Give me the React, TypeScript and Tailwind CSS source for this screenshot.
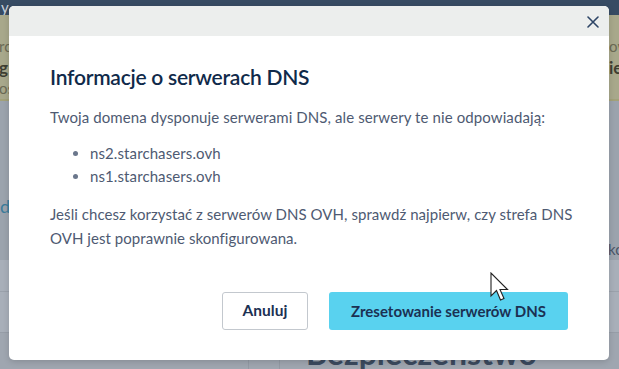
import React from "react";

const font = { fontFamily: "Lato, 'Noto Sans', sans-serif" };

export default function App() {
  return (
    <div className="relative w-[619px] h-[369px] overflow-hidden bg-[#9ba3ad]" style={font}>
      {/* background page (under overlay) */}
      <div className="flex flex-col h-full">
        <div className="h-[19px] bg-[#374b63] text-[#c9d0da] text-[15px] leading-[14px] pl-[1px]">y</div>
        <div className="h-[101px] bg-[#a8a88b] border-b-2 border-[#a2a17a] flex justify-between text-[#6b6a55]">
          <div className="w-[9px] overflow-hidden pt-[21px] text-[15px] leading-[21px] whitespace-nowrap">
            <div className="-ml-[1px]">rc</div>
            <div className="-ml-[1px] font-bold text-[#3e3e32] text-[17px]">g</div>
            <div className="-ml-[1px]">os</div>
          </div>
          <div className="w-[10px] overflow-hidden pt-[21px] text-[15px] leading-[21px] whitespace-nowrap">
            <div>ow</div>
            <div className="font-bold text-[#3e3e32] text-[17px]">ie</div>
          </div>
        </div>
        <div className="h-[168px] flex justify-between">
          <div className="w-[9px] overflow-hidden pt-[92px] text-[18px] text-[#3b7c9b] whitespace-nowrap">d</div>
          <div className="w-[11px] overflow-hidden pt-[137px] text-[15px] text-[#4a5568] whitespace-nowrap">ko</div>
        </div>
        <div className="flex-1 bg-[#a8afb9] flex flex-col">
          <div className="h-[32px] border-b border-[#9aa1ab]"></div>
          <div className="h-[40px]"></div>
          <div className="flex-1 flex bg-[#9fa6b0] border-t border-[#969da7]">
            <div className="w-[249px] border-r border-[#939aa4]"></div>
            <div className="w-[31px] border-r border-[#939aa4]"></div>
            <div className="pl-[26px] pt-[4px] text-[32px] leading-[32px] font-bold text-[#3b4a5e] whitespace-nowrap">Bezpieczeństwo</div>
          </div>
        </div>
      </div>

      {/* modal */}
      <div className="absolute left-[9px] top-[6px] w-[600px] h-[354px] bg-white rounded-[5px] overflow-hidden shadow-[0_2px_6px_rgba(0,0,0,0.15)] flex flex-col">
        <div className="h-[30px] bg-[#eceeed] flex justify-end items-center pr-[10px]">
          <svg width="12" height="12" viewBox="0 0 12 12" className="mt-[2px]">
            <path d="M1 1 L11 11 M11 1 L1 11" stroke="#2d4566" strokeWidth="1.6" strokeLinecap="round" />
          </svg>
        </div>
        <div className="flex-1 flex flex-col px-[41px] pt-[27px] pb-[30px]">
          <h2 className="text-[21px] leading-[28px] font-semibold text-[#102a4a] tracking-[-0.25px]">
            Informacje o serwerach DNS
          </h2>
          <p className="mt-[14px] text-[15px] leading-[24px] text-[#4e5a72] tracking-[0.1px]">
            Twoja domena dysponuje serwerami DNS, ale serwery te nie odpowiadają:
          </p>
          <ul className="mt-[13px] pl-[40px] text-[15px] leading-[23px] text-[#4e5a72] list-disc marker:text-[#6b778c] tracking-[0.1px]">
            <li>ns2.starchasers.ovh</li>
            <li>ns1.starchasers.ovh</li>
          </ul>
          <p className="mt-[14px] text-[15px] leading-[24px] text-[#4e5a72] tracking-[0.05px] -mr-[10px]">
            Jeśli chcesz korzystać z serwerów DNS OVH, sprawdź najpierw, czy strefa DNS OVH jest poprawnie skonfigurowana.
          </p>
          <div className="mt-auto flex justify-end gap-[21px]">
            <button className="w-[86px] h-[38px] border border-[#c3c8ce] rounded-[3px] bg-white text-[15.5px] font-bold text-[#1b3153]">
              Anuluj
            </button>
            <button className="w-[239px] h-[38px] rounded-[3px] bg-[#59d2ef] text-[15px] font-bold text-[#1b3153]">
              Zresetowanie serwerów DNS
            </button>
          </div>
        </div>
      </div>

      {/* mouse cursor */}
      <svg className="absolute left-[490px] top-[272px]" width="20" height="32" viewBox="0 0 20 32">
        <path d="M1 1 L1 24 L6.5 18.5 L10.5 28 L14 26.5 L10 17.5 L17.5 17.5 Z" fill="white" stroke="#222" strokeWidth="1.1" strokeLinejoin="miter" />
      </svg>
    </div>
  );
}
